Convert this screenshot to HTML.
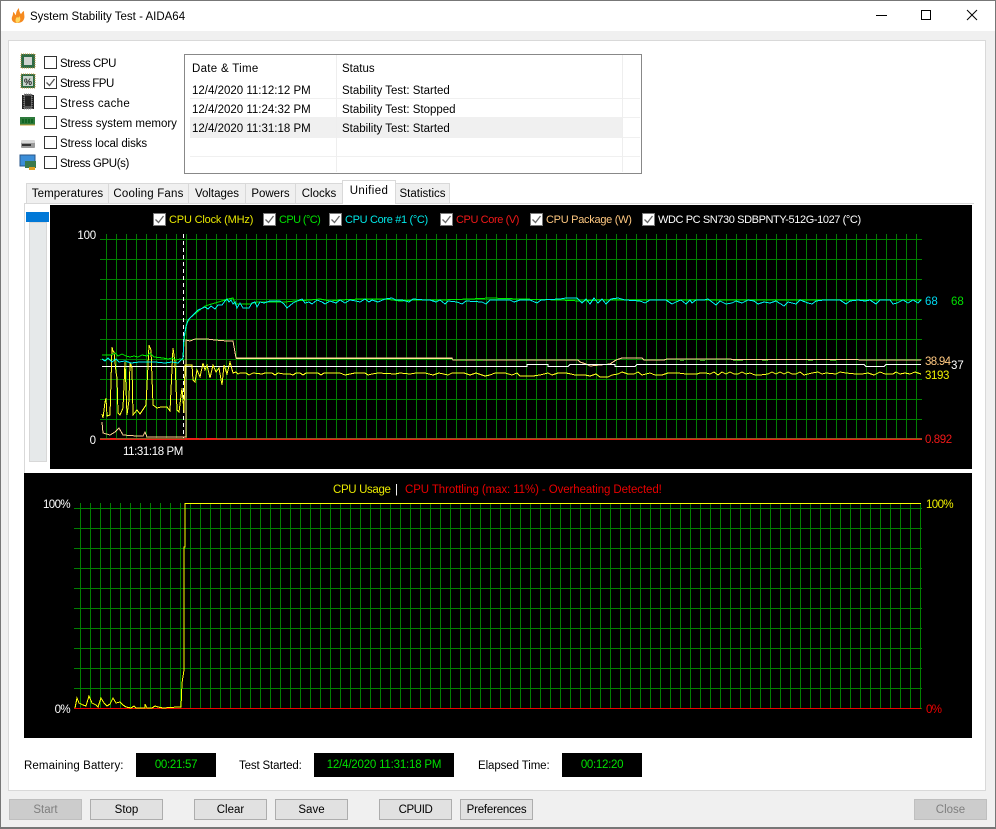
<!DOCTYPE html>
<html><head><meta charset="utf-8"><title>System Stability Test - AIDA64</title>
<style>
html,body{margin:0;padding:0;background:#f0f0f0}
body{position:relative;width:996px;height:829px;overflow:hidden;font:11.5px/16px "Liberation Sans",Arial,sans-serif;color:#000}
div{position:absolute;box-sizing:border-box}
.t{position:absolute;white-space:nowrap;line-height:16px;margin-top:1px}
.l{font-size:11px}
.cb{width:13px;height:13px;background:#fff;border:1px solid #333}
.lcb{width:13px;height:13px;background:#fff;border:1px solid #777;top:213px}
.lcb svg,.cb svg{position:absolute;left:0;top:0}
.tab{top:183px;height:20px;background:#f0f0f0;border:1px solid #d9d9d9;border-bottom:0;text-align:center;line-height:21px;white-space:nowrap}
.btn{top:799px;width:73px;height:21px;background:#e1e1e1;border:1px solid #adadad;text-align:center;line-height:21px}
.dis{background:#ccc;color:#7f7f7f;border-color:#bfbfbf}
.box{top:753px;height:24px;background:#000;color:#00e000;text-align:center;line-height:25px}
.row{left:190px;width:450px;height:1px;background:#f0f0f0}
</style></head><body>
<!-- window -->
<div style="left:0;top:0;width:996px;height:829px;border:1px solid #777;border-bottom:2px solid #777;background:#f0f0f0"></div>
<div style="left:1px;top:1px;width:994px;height:30px;background:#fff"></div>
<span class="t" style="left:30px;top:8px">System Stability Test - AIDA64</span>
<svg style="position:absolute;left:10px;top:7px" width="16" height="17" viewBox="0 0 16 17"><path d="M7 16C3 16 1 13 2 10 3 8 3 7 3 5 5 6 5 8 6 8 6 5 7 3 9 1 9 4 10 6 11 7 12 6 12 5 14 4 14 8 15 10 14 12 13 15 10 16 7 16Z" fill="#f58a1f"/><path d="M7 16C5 15 5 12 7 10 8 11 9 11 9 9 11 11 11 15 7 16Z" fill="#ffd860"/></svg>
<svg style="position:absolute;left:870px;top:5px" width="115" height="20"><path d="M6 10.5H17" stroke="#000"/><rect x="51.5" y="5.5" width="9" height="9" fill="none" stroke="#000"/><path d="M97 5L107 15M107 5L97 15" stroke="#000" fill="none"/></svg>
<!-- panel -->
<div style="left:8px;top:40px;width:978px;height:751px;background:#fff;border:1px solid #d9d9d9"></div>
<!-- icons -->
<svg style="position:absolute;left:19px;top:52px" width="20" height="120" viewBox="0 0 20 120">
<rect x="2" y="2" width="14" height="14" fill="#2f6b45" stroke="#b8963c" stroke-dasharray="1 1"/><rect x="5" y="5" width="8" height="8" fill="#cfd3cf"/>
<rect x="2" y="22" width="14" height="14" fill="#2f6b45" stroke="#b8963c" stroke-dasharray="1 1"/><rect x="4" y="24" width="10" height="10" fill="#c8d4cc"/><text x="5" y="33" font-size="9" font-weight="bold" font-family="Liberation Sans" fill="#222">%</text>
<rect x="3" y="43" width="12" height="14" fill="#222"/><rect x="5" y="42" width="8" height="15" fill="#555" stroke="#999" stroke-dasharray="1 1"/><rect x="6" y="44" width="6" height="10" fill="#222"/>
<rect x="1" y="65" width="15" height="8" fill="#2e7a3c"/><path d="M3 67h2v4H3zM6 67h2v4H6zM9 67h2v4H9zM12 67h2v4h-2z" fill="#162"/><path d="M1 73h15" stroke="#c9a23a"/>
<rect x="2" y="90" width="14" height="6" rx="1" fill="#9a9a9a"/><rect x="2" y="88" width="14" height="3" rx="1" fill="#d8d8d8"/><rect x="3" y="92" width="9" height="2" fill="#333"/>
<rect x="1" y="103" width="15" height="11" fill="#3c8ed8" stroke="#27568a"/><rect x="6" y="109" width="11" height="7" fill="#3c7a4c"/><rect x="10" y="115" width="6" height="3" fill="#e0a020"/>
</svg>
<!-- checks -->
<div class="cb" style="left:44px;top:56px"></div><span class="t" style="left:60px;top:55px;letter-spacing:-.4px">Stress CPU</span>
<div class="cb" style="left:44px;top:76px"><svg width="11" height="11"><path d="M1.5 5.5L4.5 8.5L9.5 2" fill="none" stroke="#555" stroke-width="1.3"/></svg></div><span class="t" style="left:60px;top:75px;letter-spacing:-.5px">Stress FPU</span>
<div class="cb" style="left:44px;top:96px"></div><span class="t" style="left:60px;top:95px;letter-spacing:.3px">Stress cache</span>
<div class="cb" style="left:44px;top:116px"></div><span class="t" style="left:60px;top:115px">Stress system memory</span>
<div class="cb" style="left:44px;top:136px"></div><span class="t" style="left:60px;top:135px;letter-spacing:-.1px">Stress local disks</span>
<div class="cb" style="left:44px;top:156px"></div><span class="t" style="left:60px;top:155px;letter-spacing:-.4px">Stress GPU(s)</span>
<!-- list -->
<div style="left:184px;top:54px;width:458px;height:120px;background:#fff;border:1px solid #888"></div>
<div style="left:190px;top:118px;width:432px;height:19px;background:#f0f0f0"></div>
<div class="row" style="top:98px"></div><div class="row" style="top:117px"></div><div class="row" style="top:137px"></div><div class="row" style="top:156px"></div>
<div style="left:336px;top:55px;width:1px;height:117px;background:#eee"></div>
<div style="left:622px;top:55px;width:1px;height:117px;background:#eee"></div>
<span class="t" style="left:192px;top:60px;letter-spacing:.3px">Date &amp; Time</span><span class="t" style="left:342px;top:60px">Status</span>
<span class="t" style="left:192px;top:82px">12/4/2020 11:12:12 PM</span><span class="t" style="left:342px;top:82px">Stability Test: Started</span>
<span class="t" style="left:192px;top:101px">12/4/2020 11:24:32 PM</span><span class="t" style="left:342px;top:101px">Stability Test: Stopped</span>
<span class="t" style="left:192px;top:120px">12/4/2020 11:31:18 PM</span><span class="t" style="left:342px;top:120px">Stability Test: Started</span>
<!-- tabs -->
<div style="left:24px;top:203px;width:950px;height:1px;background:#d9d9d9"></div>
<div style="left:24px;top:203px;width:1px;height:270px;background:#d9d9d9"></div>
<div class="tab" style="left:26px;width:83px;letter-spacing:.1px">Temperatures</div>
<div class="tab" style="left:108px;width:81px;letter-spacing:.2px">Cooling Fans</div>
<div class="tab" style="left:188px;width:58px">Voltages</div>
<div class="tab" style="left:245px;width:51px">Powers</div>
<div class="tab" style="left:295px;width:48px">Clocks</div>
<div class="tab" style="left:395px;width:55px">Statistics</div>
<div class="tab" style="left:342px;top:180px;width:54px;height:24px;background:#fff;line-height:21px;letter-spacing:.4px">Unified</div>
<!-- slider -->
<div style="left:29px;top:222px;width:18px;height:240px;background:#e6e9ea;border:1px solid #d8d8d8"></div>
<div style="left:26px;top:212px;width:23px;height:10px;background:#0078d7"></div>
<!-- top graph -->
<div style="left:50px;top:205px;width:922px;height:264px;background:#000"></div>
<div style="left:106px;top:234px;width:811px;height:206px;background:linear-gradient(90deg,#008000 1px,transparent 1px) 0 0/10px 100%"></div>
<div style="left:100px;top:239px;width:822px;height:201px;background:linear-gradient(#008000 1px,transparent 1px) 0 0/100% 20px"></div>
<!-- bottom graph -->
<div style="left:24px;top:473px;width:948px;height:265px;background:#000"></div>
<div style="left:80px;top:503px;width:841px;height:206px;background:linear-gradient(90deg,#008000 1px,transparent 1px) 0 0/10px 100%"></div>
<div style="left:74px;top:508px;width:848px;height:201px;background:linear-gradient(#008000 1px,transparent 1px) 0 0/100% 20px"></div>
<svg style="position:absolute;left:0;top:0" width="996" height="829" fill="none" shape-rendering="crispEdges">
<path d="M183.5 234V440" stroke="#fff" stroke-dasharray="4 3"/>
<path d="M100 438.5H922" stroke="#8a5a20"/><path d="M100 439.5H922" stroke="#e82010"/>
<path d="M110 438.5h6M185 438.5h14M205 438.5h12" stroke="#f02018"/>
<polyline stroke="#ffd090" points="102,422 103,433 110,435 115,432 119,428 123,435 137,436 143,436 145,432 147,437 183,437 186,437 186,340 190,341 195,339 207,339 215,340 227,341 233,341 236,358 452,358 453,360 520,360 530,360 548,360 555,360 578,360 580,362 586,364 590,366 600,365 610,364 616,360 622,358 642,358 644,360 664,360 667,359 921,360"/>
<path d="M236 358.5H452" stroke="#ffe890"/>
<path d="M460 360.5h5M475 360.5h8M520 360.5h6M680 360.5h4M700 360.5h5M733 360.5h10M762 360.5h6M808 360.5h5M830 360.5h6" stroke="#40a020"/>
<path d="M102 366.5H527V364.5H548V366.5H568L570 364.5H615V366.5H635L637 364.5H864L866 366.5H884L886 364.5H921" stroke="#fff"/>
<polyline stroke="#ffff20" points="102,414 103,418 105,402 106,398 107,416 110,415 112,347 113,351 114,352 116,372 117,378 118,413 120,415 123,408 125,362 127,415 129,400 130,362 132,368 133,415 137,410 140,414 146,405 149,345 151,350 153,405 157,408 161,407 167,407 170,411 173,348 175,362 177,410 179,412 182,388 184,413 185,365 192,365 193,380 195,382 197,370 200,377 203,363 205,370 207,365 210,378 213,365 216,372 219,368 222,385 224,365 227,374 230,362 233,373 236,372 238,374 240,373 246,373 249,375 253,373 262,374 265,373 272,373 275,375 278,373 284,374 290,374 293,375 296,373 300,373 303,375 306,373 318,373 321,375 324,373 340,373 345,375 350,374 355,373 365,373 368,375 372,374 378,373 395,374 400,373 410,374 416,373 425,373 433,375 439,373 448,375 452,373 464,373 470,375 476,373 485,376 490,375 495,373 505,373 512,375 517,373 520,376 525,376 533,376 540,375 548,373 552,375 558,373 566,373 571,374 575,375 585,375 590,376 596,374 600,377 608,377 612,375 618,374 622,372 628,374 634,374 638,372 642,375 650,373 655,375 662,375 668,373 678,373 686,374 692,374 697,374 700,373 706,373 710,374 714,372 718,375 722,372 726,374 730,372 734,374 738,374 742,372 746,374 750,373 755,375 760,375 768,374 772,372 776,374 780,372 784,374 788,372 792,374 796,374 800,372 804,375 808,374 812,373 818,372 822,374 826,373 836,374 840,372 846,373 856,374 862,374 868,373 874,375 880,372 885,374 893,374 896,372 900,374 905,373 910,374 915,372 921,374"/>
<polyline stroke="#00e800" points="102,355 111,355 115,353 118,356 122,354 126,356 130,357 134,356 138,357 142,355 147,356 150,353 154,357 163,358 168,359 172,358 176,360 180,359 183,360 184,342 186,325 190,318 196,313 205,306 215,303 222,301 228,299 233,298 235,304 250,304 257,302 285,302 295,301 310,300 320,299 330,301 340,300 360,299 385,299 400,301 415,300 440,300 470,299 490,298 520,299 560,300 580,301 600,300 640,300 700,300 921,300"/>
<polyline stroke="#00f0f0" points="102,359 105,361 108,358 112,362 116,359 119,362 125,361 131,363 140,362 155,362 165,363 172,362 178,363 183,358 184,337 186,327 188,320 193,315 198,310 205,307 208,309 211,306 215,309 218,305 222,305 225,301 227,299 229,302 231,300 233,304 235,302 237,308 240,303 243,308 249,308 252,303 255,302 257,307 260,302 264,303 270,301 280,301 284,304 287,308 293,303 297,301 302,299 305,303 309,302 312,304 317,300 322,302 325,304 330,301 336,303 340,300 345,303 350,300 356,301 360,302 365,299 369,302 372,300 378,302 385,299 392,298 396,300 402,300 409,302 413,299 425,300 430,300 436,302 440,300 445,304 448,301 457,302 462,304 466,301 482,302 486,304 490,300 510,300 514,302 520,300 530,300 537,303 541,300 560,299 566,298 570,298 577,298 582,303 586,299 590,304 594,298 598,303 602,299 606,304 611,299 618,298 625,300 640,301 645,303 650,300 666,300 672,304 676,302 681,300 686,304 690,300 692,303 696,300 704,300 708,299 712,302 716,305 720,301 726,304 732,303 736,301 742,303 748,300 754,301 758,304 764,302 770,303 776,301 784,306 788,302 796,304 800,300 808,303 812,304 816,301 824,300 836,300 840,300 846,304 850,301 858,300 865,301 870,300 876,304 880,300 890,300 893,304 897,303 903,300 908,303 913,300 918,303 921,300"/>
<path d="M74 708.5H921" stroke="#f00000"/>
<polyline stroke="#ffff00" points="75,708 77,698 79,703 83,705 86,706 89,696 92,703 96,705 98,707 101,698 104,703 107,706 110,704 113,698 116,703 120,702 123,705 126,707 131,708 134,706 136,708 145,708 145,704 147,708 152,708 155,706 158,707 163,708 178,707 181,707 182,683 184,670 184,547 185,547 185,503.5 921,503.5"/>
</svg>
<!-- legend -->
<div class="lcb" style="left:153px"><svg width="11" height="11"><path d="M1.5 5.5L4.5 8.5L9.5 2" fill="none" stroke="#666" stroke-width="1.3"/></svg></div><span class="t l" style="left:169px;top:211px;color:#e8e800;letter-spacing:-.17px">CPU Clock (MHz)</span>
<div class="lcb" style="left:263px"><svg width="11" height="11"><path d="M1.5 5.5L4.5 8.5L9.5 2" fill="none" stroke="#666" stroke-width="1.3"/></svg></div><span class="t l" style="left:279px;top:211px;color:#00e000;letter-spacing:-.6px">CPU (°C)</span>
<div class="lcb" style="left:329px"><svg width="11" height="11"><path d="M1.5 5.5L4.5 8.5L9.5 2" fill="none" stroke="#666" stroke-width="1.3"/></svg></div><span class="t l" style="left:345px;top:211px;color:#00e8e8;letter-spacing:-.33px">CPU Core #1 (°C)</span>
<div class="lcb" style="left:440px"><svg width="11" height="11"><path d="M1.5 5.5L4.5 8.5L9.5 2" fill="none" stroke="#666" stroke-width="1.3"/></svg></div><span class="t l" style="left:456px;top:211px;color:#f01818;letter-spacing:-.4px">CPU Core (V)</span>
<div class="lcb" style="left:530px"><svg width="11" height="11"><path d="M1.5 5.5L4.5 8.5L9.5 2" fill="none" stroke="#666" stroke-width="1.3"/></svg></div><span class="t l" style="left:546px;top:211px;color:#ffc880;letter-spacing:-.28px">CPU Package (W)</span>
<div class="lcb" style="left:642px"><svg width="11" height="11"><path d="M1.5 5.5L4.5 8.5L9.5 2" fill="none" stroke="#666" stroke-width="1.3"/></svg></div><span class="t l" style="left:658px;top:211px;color:#fff;letter-spacing:-.4px">WDC PC SN730 SDBPNTY-512G-1027 (°C)</span>
<!-- labels -->
<span class="t" style="right:900px;top:227px;color:#fff;letter-spacing:-.2px">100</span>
<span class="t" style="right:900px;top:432px;color:#fff">0</span>
<span class="t" style="left:123px;top:443px;color:#fff;letter-spacing:-.4px">11:31:18 PM</span>
<span class="t" style="left:925px;top:293px;color:#00d8f0">68</span>
<span class="t" style="left:951px;top:293px;color:#00e000">68</span>
<span class="t" style="left:925px;top:353px;color:#ffc880;letter-spacing:-.7px">38.94</span>
<span class="t" style="left:951px;top:357px;color:#fff">37</span>
<span class="t" style="left:925px;top:367px;color:#f0f000;letter-spacing:-.4px">3193</span>
<span class="t" style="left:925px;top:431px;color:#f01818;letter-spacing:-.4px">0.892</span>
<span class="t" style="left:333px;top:481px;color:#e8e800;letter-spacing:-.35px">CPU Usage</span>
<span class="t" style="left:395px;top:481px;color:#fff">|</span>
<span class="t" style="left:405px;top:481px;color:#e80000;letter-spacing:-.1px">CPU Throttling (max: 11%) - Overheating Detected!</span>
<span class="t" style="right:926px;top:496px;color:#fff;letter-spacing:-.6px">100%</span>
<span class="t" style="right:926px;top:701px;color:#fff;letter-spacing:-.6px">0%</span>
<span class="t" style="left:926px;top:496px;color:#f0f000;letter-spacing:-.6px">100%</span>
<span class="t" style="left:926px;top:701px;color:#f00000;letter-spacing:-.6px">0%</span>
<!-- status -->
<span class="t" style="left:24px;top:757px;letter-spacing:.1px">Remaining Battery:</span>
<div class="box" style="left:136px;width:80px;letter-spacing:-.3px">00:21:57</div>
<span class="t" style="left:239px;top:757px;letter-spacing:-.15px">Test Started:</span>
<div class="box" style="left:314px;width:140px;letter-spacing:-.2px">12/4/2020 11:31:18 PM</div>
<span class="t" style="left:478px;top:757px;letter-spacing:-.1px">Elapsed Time:</span>
<div class="box" style="left:562px;width:80px;letter-spacing:-.3px">00:12:20</div>
<!-- buttons -->
<div class="btn dis" style="left:9px">Start</div>
<div class="btn" style="left:90px">Stop</div>
<div class="btn" style="left:194px">Clear</div>
<div class="btn" style="left:275px">Save</div>
<div class="btn" style="left:379px;letter-spacing:-.4px">CPUID</div>
<div class="btn" style="left:460px;letter-spacing:-.2px">Preferences</div>
<div class="btn dis" style="left:914px">Close</div>
</body></html>
